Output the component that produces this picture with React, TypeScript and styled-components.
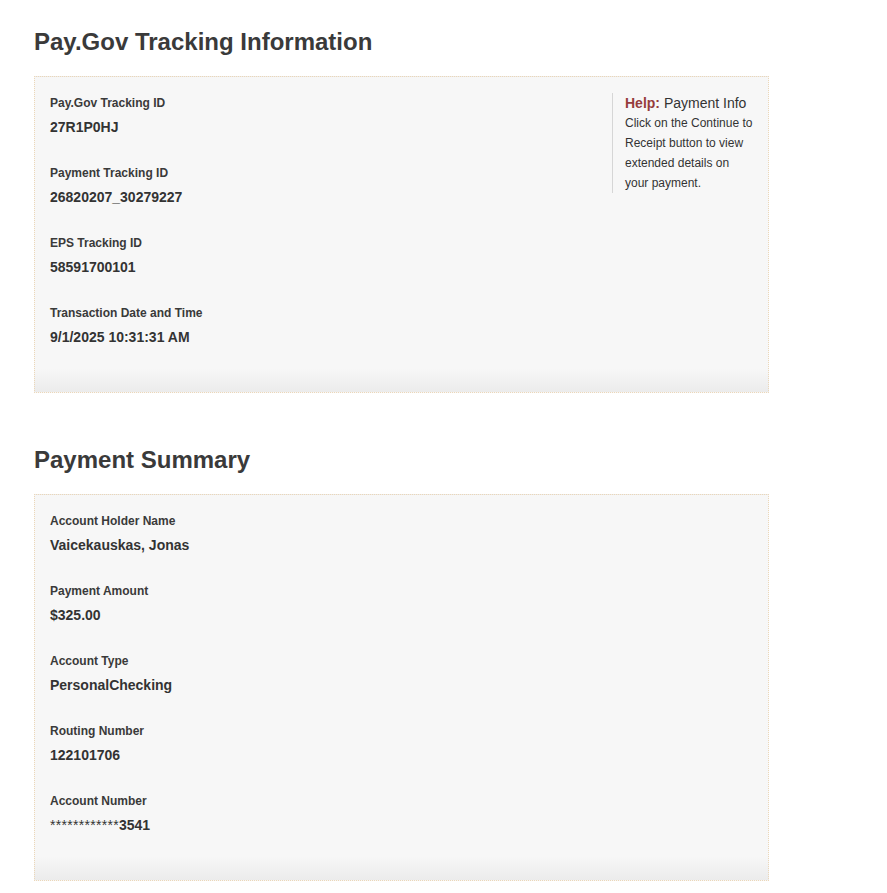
import React from "react";
import styled, { createGlobalStyle } from "styled-components";

const Global = createGlobalStyle`
  html, body { margin: 0; padding: 0; background: #fff; }
  body { font-family: "Liberation Sans", Arial, sans-serif; color: #333; }
`;

const Page = styled.div`
  padding: 26px 0 0 34px;
  width: 735px;
`;

const Heading = styled.h2`
  margin: 0 0 18px 0;
  font-size: 24px;
  line-height: 32px;
  font-weight: bold;
  color: #3a3a3a;
`;

const Section = styled.section`
  margin-bottom: 51px;
`;

const Card = styled.div`
  border: 1px dotted #ecd7b8;
  background: linear-gradient(to bottom, #f7f7f7 0, #f7f7f7 calc(100% - 24px), #ebebeb 100%);
  padding: 16px 15px 45px 15px;
  display: flex;
  justify-content: space-between;
  align-items: flex-start;
`;

const Fields = styled.div`
  display: flex;
  flex-direction: column;
  gap: 26px;
`;

const Field = styled.div`
  display: flex;
  flex-direction: column;
  gap: 4px;
`;

const Label = styled.div`
  font-size: 12px;
  line-height: 20px;
  font-weight: bold;
  color: #3a3a3a;
`;

const Value = styled.div`
  font-size: 14px;
  line-height: 20px;
  font-weight: bold;
  color: #333;
`;

const Masked = styled.span`
  font-weight: normal;
  letter-spacing: 0.3px;
`;

const Help = styled.aside`
  width: 128px;
  border-left: 1px solid #d6d6d6;
  padding: 0 0 0 12px;
  font-size: 12px;
  line-height: 20px;
  color: #333;
`;

const HelpTitle = styled.div`
  font-size: 14px;
  line-height: 20px;
`;

const HelpStrong = styled.strong`
  color: #963c3c;
`;

type Item = { label: string; value: React.ReactNode };

const tracking: Item[] = [
  { label: "Pay.Gov Tracking ID", value: "27R1P0HJ" },
  { label: "Payment Tracking ID", value: "26820207_30279227" },
  { label: "EPS Tracking ID", value: "58591700101" },
  { label: "Transaction Date and Time", value: "9/1/2025 10:31:31 AM" },
];

const summary: Item[] = [
  { label: "Account Holder Name", value: "Vaicekauskas, Jonas" },
  { label: "Payment Amount", value: "$325.00" },
  { label: "Account Type", value: "PersonalChecking" },
  { label: "Routing Number", value: "122101706" },
  {
    label: "Account Number",
    value: (
      <>
        <Masked>************</Masked>3541
      </>
    ),
  },
];

const FieldList = ({ items }: { items: Item[] }) => (
  <Fields>
    {items.map((it) => (
      <Field key={it.label}>
        <Label>{it.label}</Label>
        <Value>{it.value}</Value>
      </Field>
    ))}
  </Fields>
);

export default function App() {
  return (
    <>
      <Global />
      <Page>
        <Section>
          <Heading>Pay.Gov Tracking Information</Heading>
          <Card>
            <FieldList items={tracking} />
            <Help>
              <HelpTitle>
                <HelpStrong>Help:</HelpStrong> Payment Info
              </HelpTitle>
              Click on the Continue to Receipt button to view extended details on your payment.
            </Help>
          </Card>
        </Section>
        <Section>
          <Heading>Payment Summary</Heading>
          <Card>
            <FieldList items={summary} />
          </Card>
        </Section>
      </Page>
    </>
  );
}
